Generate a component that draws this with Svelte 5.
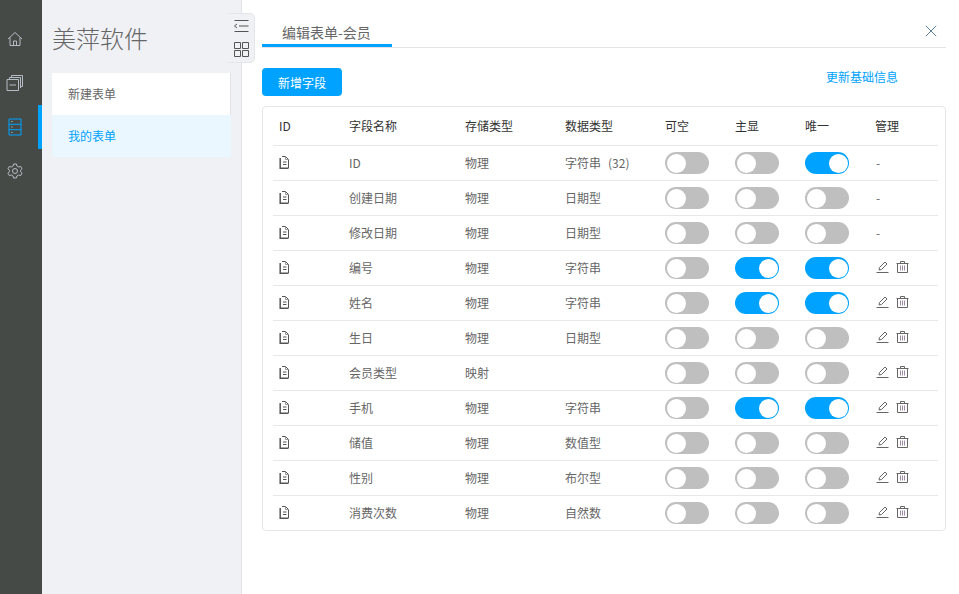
<script lang="ts">
	interface Field {
		name: string;
		store: string;
		type: string;
		size?: string;
		main?: boolean;
		unique?: boolean;
		locked?: boolean;
	}

	const fields: Field[] = [
		{ name: 'ID', store: '物理', type: '字符串', size: '(32)', unique: true, locked: true },
		{ name: '创建日期', store: '物理', type: '日期型', locked: true },
		{ name: '修改日期', store: '物理', type: '日期型', locked: true },
		{ name: '编号', store: '物理', type: '字符串', main: true, unique: true },
		{ name: '姓名', store: '物理', type: '字符串', main: true, unique: true },
		{ name: '生日', store: '物理', type: '日期型' },
		{ name: '会员类型', store: '映射', type: '' },
		{ name: '手机', store: '物理', type: '字符串', main: true, unique: true },
		{ name: '储值', store: '物理', type: '数值型' },
		{ name: '性别', store: '物理', type: '布尔型' },
		{ name: '消费次数', store: '物理', type: '自然数' }
	];
	const heads = ['ID', '字段名称', '存储类型', '数据类型', '可空', '主显', '唯一', '管理'];
</script>

<div class="page">
	<nav class="rail">
		<a class="rail-item">
			<svg viewBox="0 0 16 16" width="16" height="16" fill="none" stroke="currentColor">
				<path d="M1 8 8 1.5 15 8M3 6.5V14.5H13V6.5M6.5 14.5V10H9.5V14.5" />
			</svg>
		</a>
		<a class="rail-item">
			<svg viewBox="0 0 18 18" width="18" height="18" fill="none" stroke="currentColor">
				<path d="M1 5.5H12.5V16.5H1ZM3.5 5.5V3.5H14.5V14M5.5 3.5V1.5H16.5V12.5H14.5M3.5 11H10" />
			</svg>
		</a>
		<a class="rail-item active">
			<svg viewBox="0 0 14 18" width="14" height="18" fill="none" stroke="currentColor">
				<path d="M1 1H13V17H1ZM1 6.3H13M1 11.7H13" />
				<path d="M3 3.5H5M3 9H5M3 14.5H5" stroke="#7f9a9a" />
			</svg>
		</a>
		<a class="rail-item">
			<svg viewBox="0 0 16 16" width="16" height="16" fill="none" stroke="currentColor">
				<path d="M6.6 1H9.4L9.9 3 11.7 4 13.7 3.4 15 5.8 13.6 7.2V8.8L15 10.2 13.7 12.6 11.7 12 9.9 13 9.4 15H6.6L6.1 13 4.3 12 2.3 12.6 1 10.2 2.4 8.8V7.2L1 5.8 2.3 3.4 4.3 4 6.1 3Z" />
				<circle cx="8" cy="8" r="2.5" />
			</svg>
		</a>
	</nav>

	<aside class="side">
		<h1>美萍软件</h1>
		<ul class="menu">
			<li>新建表单</li>
			<li class="on">我的表单</li>
		</ul>
		<div class="fold">
			<svg viewBox="0 0 16 12" width="16" height="12" fill="none" stroke="#555">
				<path d="M1.5 .5H15.5M6 6H15.5M1.5 11.5H15.5M4 4 1.5 6 4 8" />
			</svg>
			<svg viewBox="0 0 15 15" width="15" height="15" fill="none" stroke="#555">
				<path d="M.5 .5H6.5V6.5H.5ZM8.5 .5H14.5V6.5H8.5ZM.5 8.5H6.5V14.5H.5ZM8.5 8.5H14.5V14.5H8.5Z" />
			</svg>
		</div>
	</aside>

	<main class="main">
		<div class="tabs">
			<span class="tab">编辑表单-会员</span>
			<svg class="close" viewBox="0 0 12 12" width="12" height="12" fill="none" stroke="#5d7f99">
				<path d="M.8 .8 11.2 11.2M11.2 .8 .8 11.2" />
			</svg>
		</div>
		<div class="tools">
			<button>新增字段</button>
			<a class="link">更新基础信息</a>
		</div>
		<div class="card">
			<div class="row head">
				{#each heads as h}
					<div>{h}</div>
				{/each}
			</div>
			{#each fields as f}
				<div class="row">
					<div>
						<svg class="doc" viewBox="0 0 10 13" width="10" height="13" fill="none" stroke="#555">
							<path d="M3 .5H6.5L9.5 3.5V12" />
							<path d="M1.2 2V12.2H9.5" stroke-width="1.5" />
							<path d="M6.5 .5V3.5H9.5" stroke="#999" />
							<path d="M4 6H7.5M4 8.5H7.5" />
						</svg>
					</div>
					<div>{f.name}</div>
					<div>{f.store}</div>
					<div>{f.type}{#if f.size}<span class="size">{f.size}</span>{/if}</div>
					<div class="toggle"><span class="switch"></span></div>
					<div class="toggle"><span class="switch" class:on={f.main}></span></div>
					<div class="toggle"><span class="switch" class:on={f.unique}></span></div>
					<div class="manage">
						{#if f.locked}
							-
						{:else}
							<svg viewBox="0 0 13 12" width="13" height="12" fill="none" stroke="#666">
								<path d="M3 9 3.5 6.5 9 1 11 3 5.5 8.5ZM.5 11.5H12.5" />
							</svg>
							<svg viewBox="0 0 13 12" width="13" height="12" fill="none" stroke="#666">
								<path d="M.5 2.5H12.5M4.5 2.5V.5H8.5V2.5M1.5 2.5V11.5H11.5V2.5" />
								<path d="M4.5 4.5V9.5M6.5 4.5V9.5M8.5 4.5V9.5" stroke="#a08aa8" />
							</svg>
						{/if}
					</div>
				</div>
			{/each}
		</div>
	</main>
</div>

<style>
	:global(body) {
		margin: 0;
		background: #fff;
	}

	.page {
		display: flex;
		height: 594px;
		font-family: 'Noto Sans CJK SC', 'Liberation Sans', sans-serif;
		font-size: 12px;
		color: #666;
		overflow: hidden;
	}

	.rail {
		flex: none;
		width: 42px;
		padding-top: 17px;
		box-sizing: border-box;
		background: #464a47;
		display: flex;
		flex-direction: column;
	}

	.rail-item {
		height: 44px;
		padding-right: 12px;
		display: flex;
		align-items: center;
		justify-content: center;
		color: #b5bcc4;
		box-sizing: border-box;
	}

	.rail-item.active {
		color: #00a2ff;
		border-right: 4px solid #00a2ff;
		padding-right: 8px;
	}

	.side {
		flex: none;
		position: relative;
		width: 200px;
		box-sizing: border-box;
		padding-left: 10px;
		background: #f0f1f5;
		border-right: 1px solid #e2e3e7;
	}

	.side h1 {
		margin: 0;
		padding-top: 20px;
		height: 73px;
		box-sizing: border-box;
		font-size: 24px;
		line-height: 36px;
		font-weight: 300;
		color: #666;
	}

	.menu {
		list-style: none;
		margin: 0;
		padding: 0;
		width: 179px;
		height: 84px;
	}

	.menu li {
		height: 42px;
		line-height: 42px;
		padding-left: 16px;
		background: #fff;
		border-right: 1px solid #e2e3e7;
		box-sizing: border-box;
	}

	.menu li.on {
		background: #ebf7ff;
		color: #00a2ff;
		border-right: 0;
	}

	.fold {
		position: absolute;
		left: 186px;
		top: 13px;
		width: 27px;
		height: 50px;
		box-sizing: border-box;
		background: #f0f1f5;
		border: 1px solid #e5e6ea;
		border-left: 0;
		border-radius: 0 5px 5px 0;
		display: flex;
		flex-direction: column;
		align-items: center;
		padding-top: 6px;
		gap: 10px;
	}

	.main {
		flex: 1;
		padding: 0 13px 0 20px;
		min-width: 0;
	}

	.tabs {
		height: 48px;
		box-sizing: border-box;
		border-bottom: 1px solid #e4e4e4;
		display: flex;
		justify-content: space-between;
		align-items: flex-start;
	}

	.tab {
		width: 130px;
		height: 47px;
		box-sizing: border-box;
		padding: 23px 0 0 20px;
		line-height: 18px;
		font-size: 14px;
		border-bottom: 3px solid #00a2ff;
	}

	.close {
		margin: 25px 9px 0 0;
	}

	.tools {
		display: flex;
		justify-content: space-between;
		align-items: flex-start;
		padding: 20px 48px 0 0;
		height: 58px;
		box-sizing: border-box;
	}

	button {
		width: 80px;
		height: 28px;
		border: 0;
		border-radius: 4px;
		background: #00a2ff;
		color: #fff;
		font: inherit;
		padding: 0;
	}

	.link {
		color: #00a2ff;
		line-height: 18px;
	}

	.card {
		border: 1px solid #e6e6e6;
		border-radius: 4px;
		padding: 0 7px 0 10px;
		height: 425px;
		box-sizing: border-box;
	}

	.row {
		display: grid;
		grid-template-columns: 70px 116px 100px 100px 70px 70px 70px 1fr;
		height: 35px;
		align-items: center;
		padding-left: 6px;
		border-top: 1px solid #e8e8e8;
		box-sizing: border-box;
	}

	.row > div {
		padding-bottom: 2px;
	}

	.row > .toggle {
		padding-bottom: 0;
	}

	.row.head {
		height: 38px;
		border-top: 0;
		color: #333;
	}

	.size {
		margin-left: 7px;
	}

	.doc {
		display: block;
	}

	.switch {
		display: block;
		position: relative;
		width: 44px;
		height: 22px;
		border-radius: 11px;
		background: #bfbfbf;
	}

	.switch::after {
		content: '';
		position: absolute;
		left: 1.5px;
		top: 1.5px;
		width: 19px;
		height: 19px;
		border-radius: 50%;
		background: #fff;
	}

	.switch.on {
		background: #00a2ff;
	}

	.switch.on::after {
		left: 23.5px;
	}

	.manage {
		display: flex;
		gap: 7px;
		align-items: center;
		padding-left: 1px;
	}
</style>
